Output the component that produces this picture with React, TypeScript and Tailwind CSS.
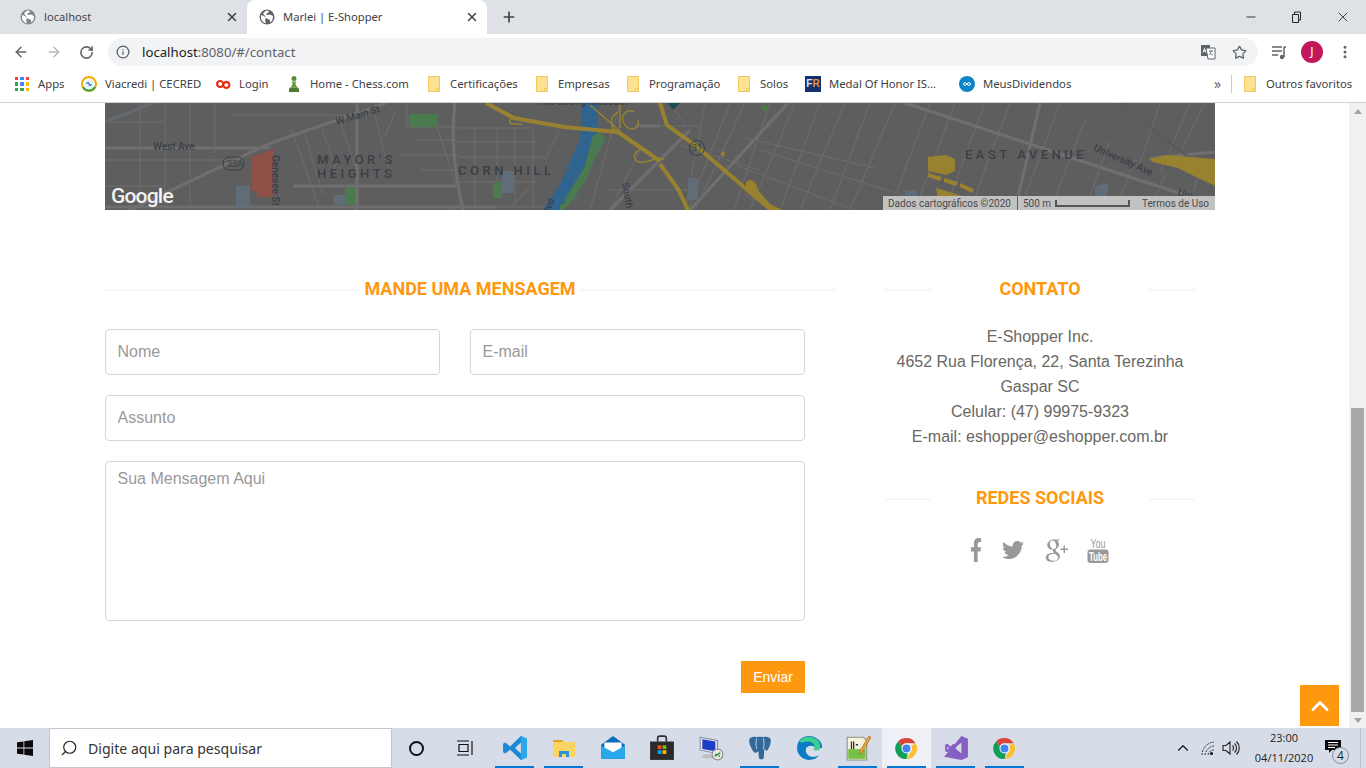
import { ArrowLeft, ArrowRight, ChevronUp, Info, RotateCw, Star, X, Plus, Minus, MoreVertical, Search } from "lucide-react";
import { FaFacebookF, FaTwitter } from "react-icons/fa";
import { TiSocialGooglePlus } from "react-icons/ti";

const ui = "font-['Noto_Sans','Liberation_Sans',sans-serif]";

function Globe({ className }: { className: string }) {
  return (
    <svg viewBox="0 0 16 16" className={className}>
      <circle cx="8" cy="8" r="7.5" fill="currentColor" />
      <path d="M2 6l3 1 2 2-1 2 1 3.500-3-1.500-2-3zM7 1.500l3 .5-1 2-2 .5 1 1.500 3-.5 3 1.500-.5 4-2 2.500-1-3-3-1-1.500-2.500L4 4.500z" fill="#fff" />
    </svg>
  );
}

function Folder() {
  return (
    <svg viewBox="0 0 16 18" className="h-[18px] w-4 shrink-0">
      <path d="M2.500 1.500h11v15h-11z" fill="#fde293" stroke="#f0c75e" />
      <path d="M10.500 16.500v-3h3" fill="none" stroke="#f0c75e" />
    </svg>
  );
}

function AppsIcon() {
  const colors = ["#ea4335", "#4285f4", "#ea4335", "#34a853", "#4285f4", "#fbbc05", "#34a853", "#34a853", "#fbbc05"];
  return (
    <div className="grid h-[14px] w-[14px] grid-cols-3 gap-[2px]">
      {colors.map((c, i) => (
        <div key={i} style={{ backgroundColor: c }} />
      ))}
    </div>
  );
}

function Viacredi() {
  return (
    <svg viewBox="0 0 16 16" className="h-4 w-4">
      <circle cx="8" cy="8" r="7" fill="none" stroke="#f2a900" strokeWidth="2" />
      <path d="M2 11a7 7 0 0 0 12 0" fill="none" stroke="#39a845" strokeWidth="2" />
      <circle cx="8" cy="8" r="4.500" fill="#e6f2fa" />
      <path d="M5.500 8c1-2 2-2 2.500 0s1.500 2 2.500 0" fill="none" stroke="#1b75bb" strokeWidth="1.200" />
    </svg>
  );
}

function LoginIcon() {
  return (
    <svg viewBox="0 0 16 16" className="h-4 w-4">
      <path d="M7.500 6.200a3 3 0 1 0 0 3.600l1-1.700a3 3 0 1 1 0 1.700M7.500 6.200l1 1.900" fill="none" stroke="#e8280f" strokeWidth="2.200" />
    </svg>
  );
}

function Pawn() {
  return (
    <svg viewBox="0 0 16 18" className="h-[18px] w-4">
      <circle cx="8" cy="3.500" r="2.500" fill="#5d8a3a" />
      <path d="M5.500 6.500h5l-1 1.500c0 2 1 3 2 4.500h-7c1-1.500 2-2.500 2-4.500z" fill="#6a9a40" />
      <path d="M3 17v-2c0-2 1-2.500 2-2.500h6c1 0 2 .5 2 2.500v2z" fill="#4c7a2e" />
    </svg>
  );
}

function MedalIcon() {
  return (
    <div className="flex h-4 w-4 items-center justify-center bg-[#14306e] font-['Liberation_Sans',sans-serif] text-[10px] font-bold leading-none">
      <span className="text-[#dfe7f5]">F</span>
      <span className="text-[#e8951d]">R</span>
    </div>
  );
}

function MeusIcon() {
  return (
    <svg viewBox="0 0 16 16" className="h-4 w-4">
      <circle cx="8" cy="8" r="8" fill="#0c84c6" />
      <path d="M8 8c-1-1.800-3.500-1.800-3.500 0s2.500 1.800 3.500 0 3.500-1.800 3.500 0-2.500 1.800-3.500 0z" fill="none" stroke="#fff" strokeWidth="1" />
    </svg>
  );
}

const bookmarks = [
  { label: "Apps", icon: <AppsIcon />, box: "w-[67px]" },
  { label: "Viacredi | CECRED", icon: <Viacredi />, box: "w-[134px]" },
  { label: "Login", icon: <LoginIcon />, box: "w-[71px]" },
  { label: "Home - Chess.com", icon: <Pawn />, box: "w-[140px]" },
  { label: "Certificações", icon: <Folder />, box: "w-[108px]" },
  { label: "Empresas", icon: <Folder />, box: "w-[91px]" },
  { label: "Programação", icon: <Folder />, box: "w-[111px]" },
  { label: "Solos", icon: <Folder />, box: "w-[69px]" },
  { label: "Medal Of Honor IS...", icon: <MedalIcon />, box: "w-[154px]" },
  { label: "MeusDividendos", icon: <MeusIcon />, box: "w-[255px]" },
];

function Tab({ title, active, box }: { title: string; active?: boolean; box: string }) {
  return (
    <div className={`flex h-[34px] items-center ${box} ${active ? "rounded-t-[8px] bg-white text-[#3c4043]" : "text-[#45474a]"}`}>
      <Globe className={`ml-[12px] h-4 w-4 shrink-0 ${active ? "text-[#5f6368]" : "text-[#80868b]"}`} />
      <span className="ml-[8px] flex-1 truncate text-[11.2px]">{title}</span>
      <X className="mr-[8px] h-[14px] w-[14px] text-[#3c4043]" strokeWidth={2.5} />
    </div>
  );
}

function BrowserChrome() {
  return (
    <div className={`${ui} shrink-0`}>
      <div className="flex h-[34px] items-end bg-[#dee1e6]">
        <div className="w-[8px]" />
        <Tab title="localhost" box="w-[239px]" />
        <Tab title="Marlei | E-Shopper" active box="w-[240px]" />
        <Plus className="ml-[14px] mb-[9px] h-4 w-4 text-[#3c4043]" strokeWidth={2.5} />
        <div className="flex-1" />
        <div className="mb-[9px] flex items-center text-[#222]">
          <Minus className="mr-[32px] h-[14px] w-[14px]" strokeWidth={1.500} />
          <svg viewBox="0 0 12 12" className="mr-[33px] h-3 w-3">
            <path d="M2.500 3.500h6v8h-6zM4.500 3.500v-2.500h6v8h-2" fill="none" stroke="#222" />
          </svg>
          <X className="mr-[15px] h-4 w-4" strokeWidth={1.250} />
        </div>
      </div>
      <div className="flex h-[34px] items-center bg-white pt-[2px]">
        <ArrowLeft className="ml-[13px] h-4 w-4 text-[#5f6368]" strokeWidth={2.250} />
        <ArrowRight className="ml-[17px] h-4 w-4 text-[#b5b8bb]" strokeWidth={2.250} />
        <RotateCw className="ml-[17px] h-[15px] w-[15px] text-[#5f6368]" strokeWidth={2.500} />
        <div className="ml-[14px] flex h-[28px] w-[1150px] items-center rounded-full bg-[#f1f3f4]">
          <Info className="ml-[8px] h-[14px] w-[14px] text-[#5f6368]" strokeWidth={2.250} />
          <span className="ml-[12px] pt-px text-[13.2px] text-[#5f6368]">
            <span className="text-[#202124]">localhost</span>:8080/#/contact
          </span>
          <div className="flex-1" />
          <svg viewBox="0 0 16 16" className="mr-[16px] h-4 w-4">
            <rect x="1" y="1" width="9" height="11" fill="#5f6368" />
            <path d="M6 4h9v11H8z" fill="#fff" stroke="#5f6368" />
            <path d="M3 8.500l1.500-4 1.500 4M3.500 7h2" fill="none" stroke="#fff" />
            <path d="M9 7h4M11 7c0 2-1 3-2 4M10 9c1 1 2 2 3 2" fill="none" stroke="#5f6368" />
          </svg>
          <Star className="mr-[11px] h-[15px] w-[15px] text-[#5f6368]" strokeWidth={2} />
        </div>
        <svg viewBox="0 0 16 16" className="ml-[13px] h-4 w-4">
          <path d="M1 3h10M1 7h10M1 11h6" stroke="#5f6368" strokeWidth="1.500" />
          <path d="M13 3v10" stroke="#5f6368" strokeWidth="1.500" />
          <circle cx="11" cy="13" r="2.200" fill="#5f6368" />
          <path d="M13 3h2" stroke="#5f6368" strokeWidth="1.500" />
        </svg>
        <div className="ml-[14px] flex h-[22px] w-[22px] items-center justify-center rounded-full bg-[#c2185b] text-[12px] text-white">J</div>
        <MoreVertical className="ml-[14px] h-4 w-4 text-[#5f6368]" strokeWidth={2.500} />
      </div>
      <div className="flex h-[35px] items-center border-b border-[#d0d0d0] bg-white pb-[2px] pl-[14px] text-[11.3px] text-[#3c4043]">
        {bookmarks.map((b) => (
          <div key={b.label} className={`flex shrink-0 items-center gap-[8px] ${b.box}`}>
            <div className="flex w-4 justify-center">{b.icon}</div>
            <span className="whitespace-nowrap">{b.label}</span>
          </div>
        ))}
        <span className="w-[13px] text-[14px] leading-none text-[#5f6368]">»</span>
        <div className="ml-[4px] mr-[10px] h-[18px] w-px bg-[#c8cacc]" />
        <div className="flex items-center gap-[8px]">
          <Folder />
          <span>Outros favoritos</span>
        </div>
      </div>
    </div>
  );
}

const thinRoads = [
  "M105 122h60M105 148h165M105 160h130M105 186h60M230 115h140M140 103v107M165 103v107M190 103v107M215 103v50M240 180v30",
  "M290 125l30 85M305 135l18 60M322 128l15 45M340 122l17 50M357 103v107M375 115l15 60M395 112l-10 25M405 127h52M415 140h42M400 155h57M420 170h37M395 186h62M300 207h250",
  "M407 103v24M437 127l20 60M458 128h75M458 142h80M458 157h90M458 182h80M475 128v80M497 128v55M515 128v80M533 128v80M510 208l20-20M560 130l-15 30",
  "M620 103l-30 107M640 150l-30 60M610 190h80M640 126h60M670 103l15 22M705 103l-20 107M730 103l-42 107M745 103l-50 107M680 145l80 25M760 150l190 60M745 195l45 20",
  "M770 103l-36 107M795 103l-45 107M820 103l-40 107M845 103l-45 107M870 103l-40 107M895 103l-45 107M930 103l-40 107M955 103l-40 107M745 138l130 30M735 165l120 45",
  "M985 103l-40 107M1010 103l-40 107M1060 103l-40 107M1085 120l-35 90M1110 140l-25 70M1135 160l-20 50M1160 103l-20 60M1190 103l-30 70M1205 103l-30 60M1165 175l-15 35M1200 170l-12 40",
];

const wideRoads = [
  "M121 214L271 143L386 103",
  "M105 148h165",
  "M293 186h164",
  "M105 207h390",
  "M357 103v107",
  "M455 103c-4 30-2 60 8 107",
  "M600 130l-45 80",
  "M788 103L690 210",
  "M905 103L1215 205",
  "M1040 103L1015 210",
  "M660 126h-25",
  "M690 130L610 210",
  "M1150 158l65-6",
];

function MapLabel({ x, y, text, wide, rotate }: { x: number; y: number; text: string; wide?: boolean; rotate?: number }) {
  return (
    <text
      x={x}
      y={y}
      transform={rotate ? `rotate(${rotate} ${x} ${y})` : undefined}
      className="font-['Roboto',sans-serif]"
      fontSize={wide ? 13 : 10}
      fontWeight={500}
      letterSpacing={wide ? 3.5 : 0}
      fill="#3b3e47"
    >
      {text}
    </text>
  );
}

function ContactMap() {
  return (
    <div className="relative h-[107px] w-[1110px] overflow-hidden bg-[#5e5e5e]">
      <svg viewBox="105 103 1110 107" className="block h-[107px] w-[1110px]">
        <path d={thinRoads.join("")} stroke="#6a6a6a" strokeWidth="1.300" fill="none" />
        <path d={wideRoads.join("")} stroke="#6f6f6f" strokeWidth="3.200" fill="none" />
        <path d="M105 122l50-20" stroke="#656a70" strokeWidth="3" fill="none" />
        <path d="M1120 103l95 75" stroke="#585b60" strokeWidth="2.500" fill="none" />
        <path d="M252 157l21-8v48h-16v-6h-5z" fill="#8f5048" />
        <path d="M236 186h14v21h-14zM334 195h11v10h-11zM502 171h12v22h-12zM688 178h10v22h-10zM905 190h12v15h-12zM1095 186l14-3-4 22h-10z" fill="#606c78" />
        <path d="M345 187h10v18h-10zM409 114h29v13h-29zM493 182h9v16h-9zM452 209h5v2h-5z" fill="#4b7a4e" />
        <path d="M582 103h16v29l-9 36-21 32-11 18-14-8 18-28 19-43z" fill="#2f648f" />
        <path d="M598 132l8 6-12 22-9 22-17 24-4-6 20-32 9-32zM560 205l20-12-20 20z" fill="#4a7a50" />
        <path d="M765 104l4 4-4 4-5-5z" fill="#4b7a4e" />
        <path d="M486 103l28 15 50 9 54 5 42 29M660 103l7 22 29 21 82 70M660 164l18 25 14 29" stroke="#98822f" strokeWidth="4" fill="none" />
        <path d="M514 118c-6 0-6 6 0 6h8M618 112c-8 5-10 15 0 20M634 112c-8-5-16 6-8 14 6 6 14 2 12-6M640 150c-8 2-8 14 4 12 12-2 16-6 20-2M590 105l30 26M620 103v25" stroke="#98822f" strokeWidth="1.500" fill="none" />
        <path d="M928 157l18-2 9 4v12l-9 4-18-4zM928 173l14 4-2 4-12-4zM944 178l14 4-2 4-12-4zM960 183l14 6-2 4-12-6zM936 188l26 8 6 12-30-10z" fill="#98822f" />
        <path d="M746 182c6-6 12 2 12 8l12 14 12 6h-14l-12-14-10-8zM722 151l3 1-1 5-3-2z" fill="#98822f" />
        <path d="M1149 159l18-4 48 4v27l-19-9-18-9-25-6z" fill="#98822f" />
        <path d="M667 103h13l-6.500 7z" fill="#1d4d52" />
        <MapLabel x={537} y={105} text="The Strong Museum" />
        <MapLabel x={153} y={150} text="West Ave" />
        <MapLabel x={337} y={125} text="W Main St" rotate={-17} />
        <MapLabel x={272} y={155} text="Genesee St" rotate={90} />
        <MapLabel x={317} y={164} text="MAYOR'S" wide />
        <MapLabel x={317} y={178} text="HEIGHTS" wide />
        <MapLabel x={458} y={175} text="CORN HILL" wide />
        <MapLabel x={548} y={218} text="Blvd" rotate={-70} />
        <MapLabel x={622} y={183} text="South A" rotate={80} />
        <MapLabel x={965} y={159} text="EAST AVENUE" wide />
        <MapLabel x={1093} y={150} text="University Ave" rotate={24} />
        <MapLabel x={1177} y={195} text="Univers" rotate={20} />
        <MapLabel x={827} y={219} text="PARK" wide />
        <rect x="223" y="157" width="21" height="13" rx="6" fill="none" stroke="#3b3e47" />
        <text x="227" y="167" fontSize="9" fill="#3b3e47" className="font-['Roboto',sans-serif]">33A</text>
        <circle cx="697" cy="148" r="7.500" fill="none" stroke="#3b3e47" />
        <text x="692" y="151" fontSize="9" fill="#3b3e47" className="font-['Roboto',sans-serif]">31</text>
        <text x="111" y="203" fontSize="21" fontWeight="500" fill="#f2f2f2" letterSpacing="-0.8" className="font-['Roboto',sans-serif]">Google</text>
      </svg>
      <div className="absolute bottom-0 right-0 flex h-[14px] w-[332px] items-center bg-[#c2c2c2] font-['Roboto',sans-serif] text-[10px] text-[#4a4a4a]">
        <span className="ml-[5px] w-[129px]">Dados cartográficos ©2020</span>
        <div className="h-full w-px bg-[#5f5f5f]" />
        <span className="ml-[5px] w-[32px]">500 m</span>
        <div className="h-[7px] w-[75px] border-x-2 border-b-2 border-[#555] bg-transparent" />
        <span className="ml-[12px]">Termos de Uso</span>
      </div>
    </div>
  );
}

function SectionTitle({ title, lineBox, mid }: { title: string; lineBox?: string; mid: string }) {
  return (
    <div className="flex h-6 items-center">
      <div className={`mt-[2px] h-[2px] bg-[#f6f6f6] ${lineBox ?? "flex-1"}`} />
      <h2 className={`text-center font-['Roboto',sans-serif] text-[18px] font-bold uppercase leading-6 text-[#fe980f] ${mid}`}>{title}</h2>
      <div className={`mt-[2px] h-[2px] bg-[#f6f6f6] ${lineBox ?? "flex-1"}`} />
    </div>
  );
}

const fieldClass =
  "block rounded-[4px] border border-[#d6d6d6] bg-white px-[11.5px] font-['Liberation_Sans',sans-serif] text-[16px] text-[#696763] outline-none placeholder:text-[#999999]";

function ContactForm() {
  return (
    <div className="w-[730px] shrink-0">
      <SectionTitle title="Mande uma mensagem" mid="w-[220px]" />
      <form className="mt-[28px] w-[700px]">
        <div className="flex gap-[30px]">
          <input className={`${fieldClass} h-[46px] w-[335px]`} placeholder="Nome" />
          <input className={`${fieldClass} h-[46px] w-[335px]`} placeholder="E-mail" />
        </div>
        <input className={`${fieldClass} mt-[20px] h-[46px] w-[700px]`} placeholder="Assunto" />
        <textarea className={`${fieldClass} mt-[20px] h-[160px] w-[700px] resize-none pt-[5px]`} placeholder="Sua Mensagem Aqui" />
        <div className="mt-[40px] flex justify-end">
          <button type="button" className="h-8 w-16 bg-[#fe980f] font-['Liberation_Sans',sans-serif] text-[14px] text-white">Enviar</button>
        </div>
      </form>
    </div>
  );
}

function YoutubeStack() {
  return (
    <svg viewBox="0 0 22 26" className="h-[26px] w-[22px]">
      <text x="11" y="10.500" textAnchor="middle" fontSize="13" fill="#999" textLength="15" lengthAdjust="spacingAndGlyphs" className="font-['Liberation_Sans',sans-serif]">You</text>
      <rect x="0.500" y="12.500" width="21" height="13.500" rx="3" fill="#999" />
      <text x="11" y="23.500" textAnchor="middle" fontSize="12" fontWeight="700" fill="#fff" textLength="18" lengthAdjust="spacingAndGlyphs" className="font-['Liberation_Sans',sans-serif]">Tube</text>
    </svg>
  );
}

function ContactInfo() {
  return (
    <div className="ml-[50px] w-[310px] shrink-0">
      <SectionTitle title="Contato" lineBox="w-[46px]" mid="flex-1" />
      <address className="mt-[23px] text-center font-['Liberation_Sans',sans-serif] text-[16px] not-italic leading-[25px] text-[#696763]">
        <p>E-Shopper Inc.</p>
        <p>4652 Rua Florença, 22, Santa Terezinha</p>
        <p>Gaspar SC</p>
        <p>Celular: (47) 99975-9323</p>
        <p>E-mail: eshopper@eshopper.com.br</p>
      </address>
      <div className="mt-[37px]">
        <SectionTitle title="Redes Sociais" lineBox="w-[46px]" mid="flex-1" />
      </div>
      <div className="mt-[21px] flex h-[38px] items-center pl-[85px] text-[#999999]">
        <FaFacebookF className="h-[24px] w-[12px]" preserveAspectRatio="none" />
        <FaTwitter className="ml-[20px] h-[22px] w-[22px]" />
        <TiSocialGooglePlus className="ml-[14px] h-[38px] w-[36px]" />
        <div className="ml-[13px]">
          <YoutubeStack />
        </div>
      </div>
    </div>
  );
}

function Scrollbar() {
  return (
    <div className="flex w-[17px] shrink-0 flex-col bg-[#f1f1f1]">
      <div className="flex h-[17px] items-center justify-center">
        <div className="h-0 w-0 border-x-[4px] border-b-[5px] border-x-transparent border-b-[#a3a3a3]" />
      </div>
      <div className="h-[288px]" />
      <div className="mx-[2px] h-[304px] bg-[#a8a8a8]" />
      <div className="flex flex-1 items-center justify-center">
        <div className="h-0 w-0 border-x-[4px] border-t-[5px] border-x-transparent border-t-[#a3a3a3]" />
      </div>
    </div>
  );
}

function Page() {
  return (
    <div className="relative flex min-h-0 flex-1 overflow-hidden bg-white">
      <div className="flex-1 overflow-hidden pl-[105px]">
        <ContactMap />
        <div className="mt-[67px] flex">
          <ContactForm />
          <ContactInfo />
        </div>
      </div>
      <Scrollbar />
      <div className="absolute bottom-[2px] right-[27px] flex h-[41px] w-[39px] items-center justify-center bg-[#fe980f]">
        <ChevronUp className="h-7 w-7 text-white" strokeWidth={2.500} />
      </div>
    </div>
  );
}

function ChromeLogo() {
  return (
    <svg viewBox="0 0 24 24" className="h-[23px] w-[23px]">
      <path d="M12 1a11 11 0 0 1 9.530 5.500H12a5.500 5.500 0 0 0-5.200 3.700L3.400 4.400A11 11 0 0 1 12 1z" fill="#db4437" />
      <path d="M21.530 6.500A11 11 0 0 1 12 23l4.800-8.200A5.500 5.500 0 0 0 17 9z" fill="#fbc02d" />
      <path d="M12 23A11 11 0 0 1 3.400 4.400l4.700 8.200a5.500 5.500 0 0 0 5.400 3.700z" fill="#0f9d58" />
      <circle cx="12" cy="12" r="5.200" fill="#fff" />
      <circle cx="12" cy="12" r="4.200" fill="#4285f4" />
    </svg>
  );
}

const taskIcons = [
  {
    key: "vscode",
    on: true,
    icon: (
      <svg viewBox="0 0 24 24" className="h-[26px] w-[26px]">
        <path d="M17.500 1L23 3.500v17L17.500 23 7.500 13.500 3 17 1 16V8l2-1 4.500 3.500zM17.500 7l-5.500 5 5.500 5z" fill="#1a8ad4" />
        <path d="M17.500 1L23 3.500v17L17.500 23z" fill="#2da7ea" />
      </svg>
    ),
  },
  {
    key: "files",
    on: true,
    icon: (
      <svg viewBox="0 0 24 24" className="h-[24px] w-[24px]">
        <path d="M1 4h9l2 2h-11z" fill="#e6a520" />
        <path d="M1 6h22v15H1z" fill="#fcd462" />
        <path d="M7 15h10v6h-3v-3h-4v3H7z" fill="#2e90d8" />
      </svg>
    ),
  },
  {
    key: "mail",
    on: false,
    icon: (
      <svg viewBox="0 0 24 24" className="h-[26px] w-[26px]">
        <path d="M12 1l11 8v13H1V9z" fill="#0a6cb8" />
        <path d="M4 7h16v7l-8 4-8-4z" fill="#fff" />
        <path d="M1 10l11 6 11-6v12H1z" fill="#28a8ea" />
      </svg>
    ),
  },
  {
    key: "store",
    on: false,
    icon: (
      <svg viewBox="0 0 24 24" className="h-[26px] w-[26px]">
        <path d="M8 6V3a2 2 0 0 1 2-2h4a2 2 0 0 1 2 2v3" fill="none" stroke="#2b2b2b" strokeWidth="1.500" />
        <path d="M1 6h22v17H1z" fill="#2b2b2b" />
        <path d="M8 9.500h3.500V13H8z" fill="#f25022" />
        <path d="M12.500 9.500H16V13h-3.500z" fill="#7fba00" />
        <path d="M8 14h3.500v3.500H8z" fill="#00a4ef" />
        <path d="M12.500 14H16v3.500h-3.500z" fill="#ffb900" />
      </svg>
    ),
  },
  {
    key: "remote",
    on: false,
    icon: (
      <svg viewBox="0 0 24 24" className="h-[26px] w-[26px]">
        <path d="M2 2l16 3v12L2 14z" fill="#e8e8f0" stroke="#8a8a9a" />
        <path d="M4 4l12 2v9L4 13z" fill="#1b3fc4" />
        <path d="M4 19c3-2 7-2 10 0v2c-3 1-7 1-10 0z" fill="#c0c0c0" />
        <circle cx="18" cy="18" r="5" fill="#e8e8e8" stroke="#8a8a8a" />
        <path d="M15.500 19.500l5-3M16 17.500l1 1M19 19l1 1" stroke="#2f8f3f" strokeWidth="1.300" />
      </svg>
    ),
  },
  {
    key: "pgadmin",
    on: true,
    icon: (
      <svg viewBox="0 0 24 24" className="h-[26px] w-[26px]">
        <path d="M2 5C2 2 6 1 9 2c2-.5 4-.5 6 0 3-1 7 0 7 3 0 4-2 7-3 9-1 1-2 0-3-1l-.5 8c-.5 2-4 2-4.500 0l-.5-6c-1 1-3 2-4 1C5 14 2 9 2 5z" fill="#33689b" />
        <path d="M9 3c-1 3-1 7 0 10M15 3c1 3 1 7 0 10" stroke="#d7dde8" strokeWidth="0.800" fill="none" />
      </svg>
    ),
  },
  {
    key: "edge",
    on: false,
    icon: (
      <svg viewBox="0 0 24 24" className="h-[26px] w-[26px]">
        <path d="M12 1C5 1 1 6 1 12c0 7 6 11 11 11 4 0 7-1 9-4-6 3-12 0-12-5 0-3 3-4 5-4s4 2 4 2h5c2 0 1-3 0-5C21 4 17 1 12 1z" fill="#0c7cc4" />
        <path d="M3 6c3-5 11-6 16-2 3 2 4 7 3 9-1 2-4 1-5 1-1 0-1-1 0-2 1-3-2-6-6-6-3 0-6 2-8 0z" fill="#3ccf91" />
      </svg>
    ),
  },
  {
    key: "notepad",
    on: true,
    icon: (
      <svg viewBox="0 0 24 24" className="h-[26px] w-[26px]">
        <path d="M2 2h15l3 3v18H2z" fill="#f5f2dc" stroke="#8f8f80" />
        <path d="M3 13h16v9H3z" fill="#76c043" />
        <path d="M6 6v7M8 6v7M10 9h2" stroke="#333" strokeWidth="1.200" />
        <path d="M22 1l2 1-8 14-3 2 1-4z" fill="#e8a33a" stroke="#9a5a1a" strokeWidth="0.500" />
      </svg>
    ),
  },
  { key: "chrome", on: true, active: true, icon: <ChromeLogo /> },
  {
    key: "vs",
    on: true,
    icon: (
      <svg viewBox="0 0 24 24" className="h-[26px] w-[26px]">
        <path d="M17 1l6 2.500v17L17 23 1 20zM17 7l-6 5 6 5z" fill="#865fc5" />
        <path d="M2 9l2-1 3 2.500L9.500 8 12 9.500v5L9.500 16 7 13.500 4 16l-2-1zM4 10.500v3l1.500-1.500zM9.500 10.500L8 12l1.500 1.500z" fill="#865fc5" />
      </svg>
    ),
  },
  { key: "chrome2", on: true, icon: <ChromeLogo /> },
];

function Taskbar() {
  return (
    <div className="flex h-10 shrink-0 items-stretch bg-[#d6dde8] font-['Open_Sans',sans-serif] text-[#1f1f1f]">
      <div className="flex w-[49px] items-center justify-center">
        <svg viewBox="0 0 16 16" className="h-4 w-4">
          <path d="M0 2.300l6.500-.9v6.200H0zM7.300 1.300L16 0v7.600H7.300zM0 8.400h6.500v6.200L0 13.700zM7.300 8.400H16V16l-8.700-1.300z" fill="#0a0a0a" />
        </svg>
      </div>
      <div className="flex w-[343px] items-center border border-[#c3c6cc] bg-white">
        <Search className="ml-[10px] h-[18px] w-[18px] -scale-x-100 text-[#222]" strokeWidth={1.500} />
        <span className="ml-[10px] pt-px font-['Noto_Sans',sans-serif] text-[14.1px] text-[#333]">Digite aqui para pesquisar</span>
      </div>
      <div className="flex w-[48px] items-center justify-center">
        <div className="h-[15px] w-[15px] rounded-full border-2 border-[#111]" />
      </div>
      <div className="flex w-[50px] items-center justify-center">
        <svg viewBox="0 0 18 16" className="h-4 w-[18px]">
          <path d="M1 1h12M1 15h12M3 4.500h9v7H3zM16 1v14" fill="none" stroke="#111" strokeWidth="1.200" />
        </svg>
      </div>
      {taskIcons.map((t) => (
        <div key={t.key} className={`relative flex w-[49px] items-center justify-center ${t.active ? "bg-[#eef0f5]" : ""}`}>
          {t.icon}
          {t.on && <div className="absolute bottom-0 left-[5px] right-[5px] h-[2px] bg-[#0078d7]" />}
        </div>
      ))}
      <div className="flex-1" />
      <div className="flex items-center">
        <ChevronUp className="h-[18px] w-[18px] text-[#111]" strokeWidth={1.500} />
        <svg viewBox="0 0 16 16" className="ml-[8px] h-4 w-4">
          <path d="M2 15a13 13 0 0 1 12-13M5 15a10 10 0 0 1 9-9M8 15a6 6 0 0 1 6-5" fill="none" stroke="#333" strokeWidth="1" strokeDasharray="2 1" />
          <circle cx="11.500" cy="13.500" r="1.500" fill="#111" />
        </svg>
        <svg viewBox="0 0 18 16" className="ml-[6px] h-4 w-[18px]">
          <path d="M1 5.500h3l4-3.500v12l-4-3.500H1zM10.500 5.500a3.500 3.500 0 0 1 0 5M12.500 3.500a6 6 0 0 1 0 9M14.500 1.500a9 9 0 0 1 0 13" fill="none" stroke="#222" strokeWidth="1.100" />
        </svg>
        <div className="ml-[14px] w-[60px] text-center text-[11px] leading-[20px] text-[#222]">
          <div>23:00</div>
          <div>04/11/2020</div>
        </div>
        <div className="relative mr-[5px] flex h-full w-[47px] items-center border-r border-[#bcc2cc] pl-[11px]">
          <svg viewBox="0 0 16 16" className="-mt-[3px] h-4 w-4">
            <path d="M0 1h16v10H7l-3 3v-3H0z" fill="#0a0a0a" />
            <path d="M3 3.500h10M3 6h10M3 8.500h7" stroke="#fff" />
          </svg>
          <div className="absolute bottom-[4px] left-[18px] flex h-[17px] w-[17px] items-center justify-center rounded-full border border-[#888] bg-[#d6dde8] text-[12px] leading-none">4</div>
        </div>
      </div>
    </div>
  );
}

export default function App() {
  return (
    <div className="flex h-[768px] w-[1366px] flex-col overflow-hidden">
      <BrowserChrome />
      <Page />
      <Taskbar />
    </div>
  );
}
